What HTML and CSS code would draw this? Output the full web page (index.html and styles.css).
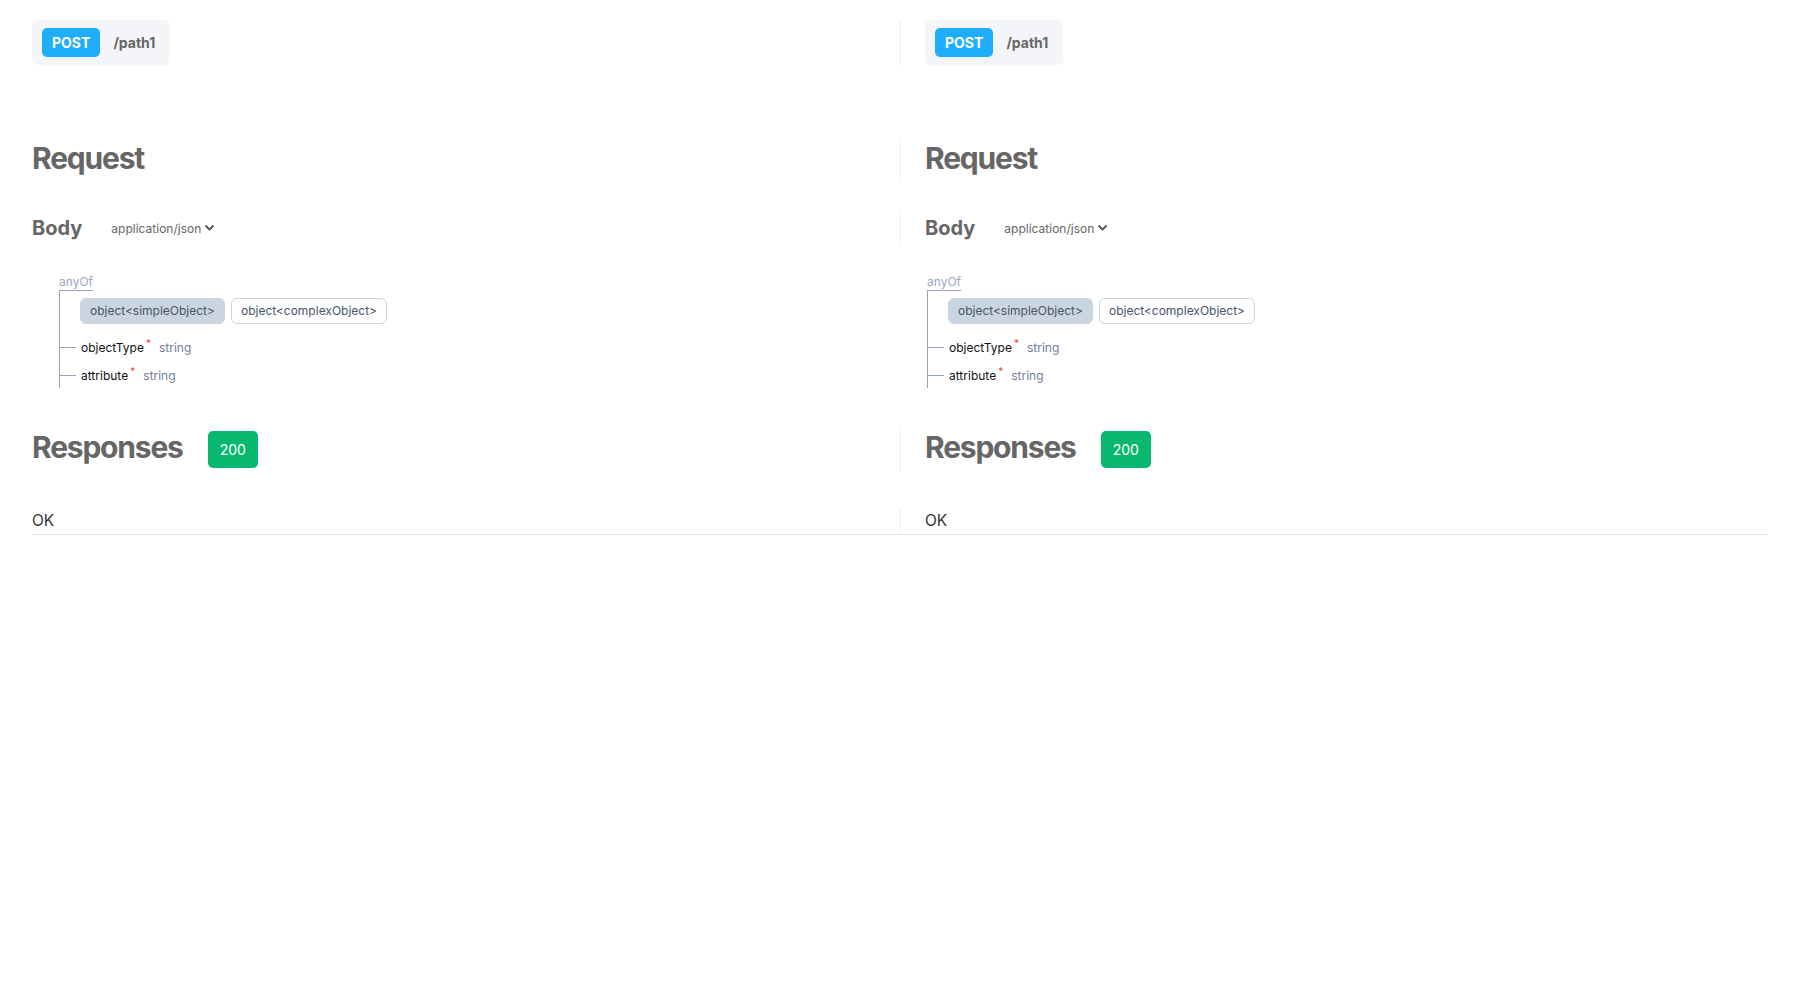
FILE: index.html
```html
<!DOCTYPE html>
<html>
<head>
<meta charset="utf-8">
<link rel="stylesheet" href="styles.css">
</head>
<body>
<div class="page">
  <div class="row row-op">
    <div class="cell">
      <div class="op"><span class="method">POST</span><span class="path">/path1</span></div>
    </div>
    <div class="cell cell-r">
      <div class="op"><span class="method">POST</span><span class="path">/path1</span></div>
    </div>
  </div>

  <div class="row row-req">
    <div class="cell"><h2 class="title">Request</h2></div>
    <div class="cell cell-r"><h2 class="title">Request</h2></div>
  </div>

  <div class="row row-body">
    <div class="cell body-cell">
      <span class="body-label">Body</span>
      <span class="mime">application/json<svg class="chev" width="9" height="6" viewBox="0 0 9 6"><path d="M1 1l3.5 3.5L8 1" fill="none" stroke="#555" stroke-width="1.8" stroke-linecap="round" stroke-linejoin="round"/></svg></span>
    </div>
    <div class="cell cell-r body-cell">
      <span class="body-label">Body</span>
      <span class="mime">application/json<svg class="chev" width="9" height="6" viewBox="0 0 9 6"><path d="M1 1l3.5 3.5L8 1" fill="none" stroke="#555" stroke-width="1.8" stroke-linecap="round" stroke-linejoin="round"/></svg></span>
    </div>
  </div>

  <div class="row row-tree">
    <div class="cell">
      <div class="tree">
        <div class="anyof">anyOf</div>
        <div class="children">
          <div class="tabs">
            <span class="tab active">object&lt;simpleObject&gt;</span>
            <span class="tab">object&lt;complexObject&gt;</span>
          </div>
          <div class="prop first"><span class="pname">objectType<sup class="req">*</sup></span><span class="ptype">string</span></div>
          <div class="prop"><span class="pname">attribute<sup class="req">*</sup></span><span class="ptype">string</span></div>
        </div>
      </div>
    </div>
    <div class="cell">
      <div class="tree">
        <div class="anyof">anyOf</div>
        <div class="children">
          <div class="tabs">
            <span class="tab active">object&lt;simpleObject&gt;</span>
            <span class="tab">object&lt;complexObject&gt;</span>
          </div>
          <div class="prop first"><span class="pname">objectType<sup class="req">*</sup></span><span class="ptype">string</span></div>
          <div class="prop"><span class="pname">attribute<sup class="req">*</sup></span><span class="ptype">string</span></div>
        </div>
      </div>
    </div>
  </div>

  <div class="row row-resp">
    <div class="cell resp-cell"><h2 class="title">Responses</h2><span class="code">200</span></div>
    <div class="cell cell-r resp-cell"><h2 class="title">Responses</h2><span class="code">200</span></div>
  </div>

  <div class="row row-ok">
    <div class="cell"><div class="ok">OK</div></div>
    <div class="cell cell-r"><div class="ok">OK</div></div>
  </div>
</div>
</body>
</html>
```

FILE: styles.css
```css
html, body {
  margin: 0;
  padding: 0;
  background: #ffffff;
  font-family: Inter, "Noto Sans", "Liberation Sans", sans-serif;
}

.page {
  padding: 20px 32px 0;
}

.row {
  display: grid;
  grid-template-columns: 1fr 1fr;
}

.cell-r {
  border-left: 1px solid #f0f0f0;
  padding-left: 24px;
}

/* operation header */
.op {
  display: flex;
  align-items: center;
  gap: 13px;
  width: fit-content;
  background: #f4f5f9;
  border-radius: 6px;
  padding: 8px 15px 8px 10px;
}

.method {
  display: block;
  background: #1eaefc;
  color: #ffffff;
  font-weight: 700;
  font-size: 14px;
  height: 29px;
  line-height: 29px;
  padding: 0 10px;
  border-radius: 5px;
}

.path {
  color: #666666;
  font-weight: 700;
  font-size: 14px;
}

/* headings */
.row-req {
  margin-top: 73px;
}

.title {
  margin: 0;
  font-size: 30px;
  line-height: 41px;
  font-weight: 700;
  color: #666666;
  letter-spacing: -1.2px;
}

/* body row */
.row-body {
  margin-top: 32px;
}

.body-cell {
  display: flex;
  align-items: center;
  height: 34px;
}

.body-label {
  font-size: 20px;
  font-weight: 700;
  color: #666666;
}

.mime {
  margin-left: 29px;
  font-size: 12px;
  color: #666666;
  display: flex;
  align-items: center;
  gap: 4px;
}

.chev {
  display: block;
}

/* schema tree */
.row-tree {
  margin-top: 29px;
}

.tree {
  margin-left: 27px;
}

.anyof {
  width: fit-content;
  font-size: 12px;
  line-height: 16px;
  color: #9aa8bd;
  border-bottom: 1px solid #94a3b8;
}

.children {
  border-left: 1px solid #94a3b8;
  padding: 7px 0 0 20px;
}

.tabs {
  display: flex;
  gap: 6px;
}

.tab {
  display: block;
  font-size: 12px;
  height: 26px;
  line-height: 24px;
  box-sizing: border-box;
  padding: 0 9px;
  border: 1px solid #cbd5e1;
  border-radius: 6px;
  color: #475569;
  background: #ffffff;
}

.tab.active {
  background: #cbd5e1;
}

.prop {
  display: flex;
  align-items: center;
  height: 26px;
  margin-top: 2px;
  margin-left: -20px;
}

.prop.first {
  margin-top: 10px;
}

.prop::before {
  content: "";
  width: 16px;
  height: 1px;
  background: #94a3b8;
  margin-right: 5px;
}

.pname {
  font-size: 12px;
  color: #111111;
}

.req {
  color: #ef4444;
  font-size: 10px;
  line-height: 0;
  margin-left: 2px;
}

.ptype {
  margin-left: 8px;
  color: #718096;
  font-size: 12px;
}

/* responses */
.row-resp {
  margin-top: 39px;
}

.resp-cell {
  display: flex;
  align-items: flex-start;
  gap: 25px;
}

.code {
  display: block;
  margin: 4px 0;
  height: 37px;
  line-height: 37px;
  padding: 0 12px;
  background: #07b86e;
  color: #ffffff;
  font-size: 14px;
  border-radius: 5px;
}

.row-ok {
  margin-top: 36px;
  border-bottom: 1px solid #e5e5e5;
}

.ok {
  font-size: 15.5px;
  line-height: 26px;
  color: #333333;
}
```
